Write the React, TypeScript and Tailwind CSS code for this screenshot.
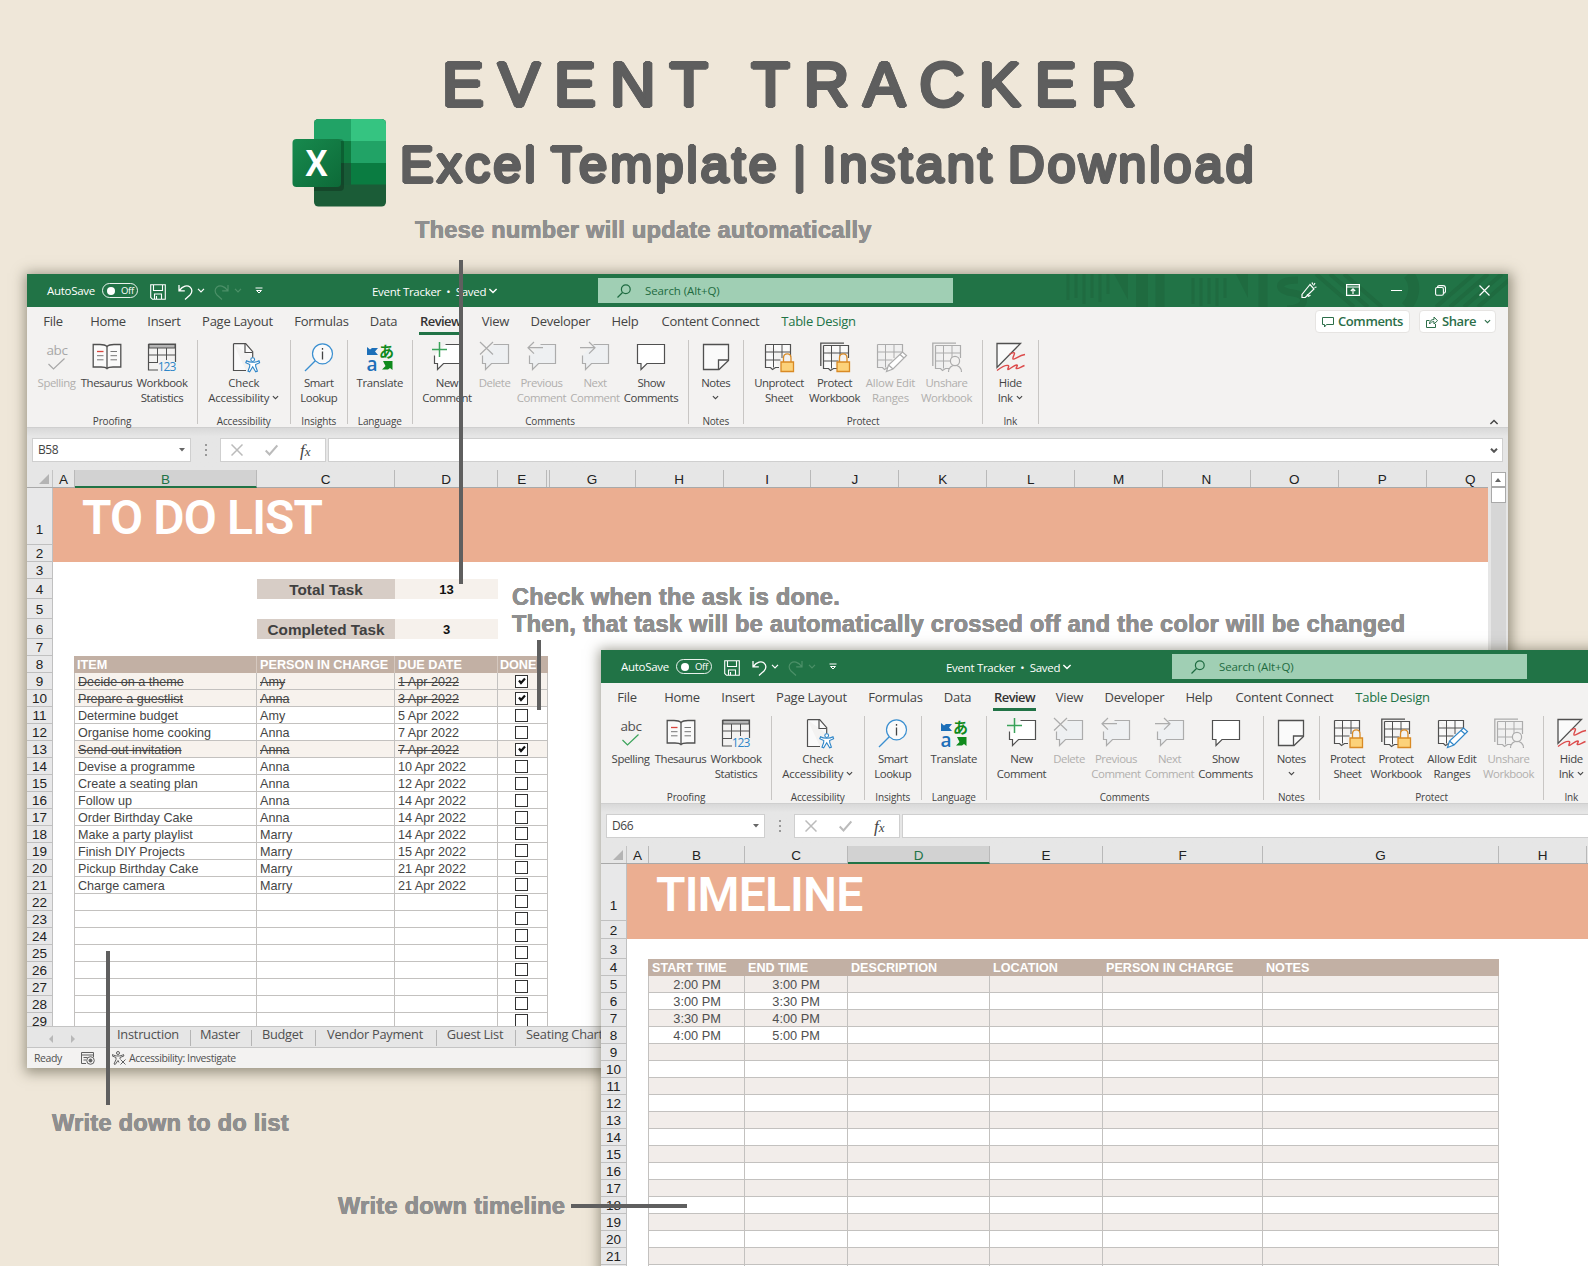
import type { ReactNode } from "react";

type Tone = { dim?: boolean };

/* ---------- icons ---------- */

function Chevron({ className = "" }: { className?: string }) {
  return (
    <svg viewBox="0 0 8 5" className={className} fill="none" stroke="currentColor" strokeWidth="1.2">
      <path d="M1 .8 4 3.8 7 .8" />
    </svg>
  );
}

function Icon({ children, className = "" }: { children: ReactNode; className?: string }) {
  return (
    <svg viewBox="0 0 30 30" fill="none" className={`h-[30px] w-[30px] shrink-0 overflow-visible ${className}`}>
      {children}
    </svg>
  );
}

function SpellingIcon({ dim }: Tone) {
  return (
    <Icon>
      <text x="15" y="13" textAnchor="middle" fontSize="13.5" fontFamily="Open Sans, sans-serif" fill={dim ? "#a8a8a8" : "#505050"}>
        abc
      </text>
      <path d="M6.5 22 11.5 27 22.5 16.5" stroke={dim ? "#a8a8a8" : "#3aa35a"} strokeWidth="1.2" />
    </Icon>
  );
}

function BookIcon() {
  return (
    <Icon>
      <path d="M15 4.5C13.5 3 11 2.500 8 2.500H1.200V25H9c3 0 5 .5 6 1.700C16 25.500 18 25 21 25h7.800V2.500H22c-3 0-5.500.5-7 2Z" fill="#fafafa" stroke="#505050" strokeWidth="1.3" />
      <path d="M15 4.5V26" stroke="#505050" strokeWidth="1.3" />
      <path d="M5 9.500h6.500" stroke="#d9453d" strokeWidth="1.3" />
      <path d="M5 13.700h6.500M5 17.800h6.500M18.500 9.500H25M18.500 13.700H25M18.500 17.800H25" stroke="#777" />
    </Icon>
  );
}

function WorkbookIcon() {
  return (
    <Icon>
      <path d="M1.500 2h27v18M1.500 2v26H11" stroke="#505050" strokeWidth="1.2" />
      <path d="M2 2.500h26v3.500H2z" fill="#b5b5b5" stroke="#505050" />
      <path d="M2 13h26.500M2 20.500h9M10.500 6v14M19.500 6v12" stroke="#505050" />
      <text x="10.8" y="28.8" fontSize="12" fontFamily="Open Sans, sans-serif" fill="#2f86c8" textLength="18">
        123
      </text>
    </Icon>
  );
}

function AccessibilityIcon() {
  return (
    <Icon>
      <path d="M4.500 1.700h12.200l7 8v6M4.500 1.700V28.500H17" fill="#fafafa" stroke="#505050" strokeWidth="1.2" />
      <path d="M16 1.700V10.500h7.500" stroke="#505050" strokeWidth="1.2" />
      <circle cx="23.700" cy="17.600" r="1.900" fill="#fff" stroke="#2f86c8" strokeWidth="1.1" />
      <path d="M17.500 18.800c3 2 9.500 2 12.500 0l.6 2-4 1.700.2 2.300 1.600 4.300-1.700.7-3-5-3 5-1.700-.7 1.600-4.300.2-2.300-4-1.700Z" fill="#fff" stroke="#2f86c8" strokeWidth="1.1" />
    </Icon>
  );
}

function LookupIcon() {
  return (
    <Icon>
      <circle cx="18.500" cy="11.800" r="10" fill="#fafafa" stroke="#3a8fd0" strokeWidth="1.2" />
      <path d="M11.300 18.800 1 29" stroke="#3a8fd0" strokeWidth="1.3" />
      <path d="M18.500 9.500v8M18.500 6v1.700" stroke="#444" strokeWidth="1.3" />
    </Icon>
  );
}

function TranslateIcon() {
  return (
    <Icon>
      <path d="M2 5l3 2.500 2-1.500h6l-3 3.500L13 13H2z" fill="#1c6fb8" />
      <text x="1.500" y="28.500" fontSize="19" fontFamily="Open Sans, sans-serif" fontWeight="600" fill="#1c6fb8" textLength="10">
        a
      </text>
      <text x="14" y="14.500" fontSize="15" fontFamily="Noto Sans CJK JP, sans-serif" fontWeight="700" fill="#0f8a1c">
        あ
      </text>
      <path d="M18 19h9.500v9l-2.500-2-2 1.500h-6l3.500-3.500z" fill="#0f8a1c" />
    </Icon>
  );
}

function Bubble({ dim, kind }: Tone & { kind: "new" | "delete" | "prev" | "next" | "show" }) {
  const line = dim ? "#acacac" : "#505050";
  const fill = dim ? "#eef0f2" : "#fff";
  return (
    <Icon>
      {kind === "show" ? (
        <path d="M1.500 2.500h27v19H11l-6 6v-6H1.500z" fill={fill} stroke={line} strokeWidth="1.2" />
      ) : (
        <path d="M13.500 2.500h15v19H11.500l-6 6v-6H2.500V13.500" fill={fill} stroke={line} strokeWidth="1.2" />
      )}
      {kind === "new" && <path d="M7.500 0v15M0 7.500h15" stroke="#3aa35a" strokeWidth="1.5" />}
      {kind === "delete" && <path d="M0 0l13 12.500M13 0 0 12.500" stroke={line} strokeWidth="1.2" />}
      {kind === "prev" && <path d="M7 0 1 5.700l6 6M1 5.700h15" stroke={line} strokeWidth="1.2" />}
      {kind === "next" && <path d="M9 0l6 5.700-6 6M0 5.700h15" stroke={line} strokeWidth="1.2" />}
    </Icon>
  );
}

function NotesIcon() {
  return (
    <Icon>
      <path d="M2.500 2.500h25v16l-9.500 9H2.500z" fill="#fafafa" stroke="#505050" strokeWidth="1.3" />
      <path d="M17.500 27.500v-9.500h10" stroke="#505050" strokeWidth="1.3" />
    </Icon>
  );
}

function SheetIcon({ dim, badge, stacked }: Tone & { badge: "lock" | "pencil" | "user"; stacked?: boolean }) {
  const line = dim ? "#acacac" : "#505050";
  const blue = dim ? "#acacac" : "#2f86c8";
  return (
    <Icon>
      {stacked && <path d="M24 1.200H.8V24" stroke={line} strokeWidth="1.3" />}
      <g transform={stacked ? "translate(2 2)" : "translate(0 1)"}>
        <path d="M1.500 1.500h25V14M1.500 1.500v23h5l2 2 3-2H15" fill={dim ? "#f0f0f0" : "#fafafa"} stroke={line} strokeWidth="1.2" />
        <path d="M1.500 9h25M1.500 17h15M9.500 1.500v23M18 1.500V15" stroke={line} />
      </g>
      {badge === "lock" && (
        <g stroke="#d98a25" strokeWidth="1.3">
          <path d="M19.500 20v-4c0-5.500 7.500-5.500 7.500 0v4" fill="#f3f2f1" />
          <path d="M17 20h12.500v9.500H17z" fill="#fcd27a" />
        </g>
      )}
      {badge === "pencil" && (
        <path d="M10.500 29.500l2-6.500L26.500 10l4 3.500L17 27zM12.500 23l4.500 4M24 12.500l4 3.500" fill="#fff" stroke={blue} strokeWidth="1.2" />
      )}
      {badge === "user" && (
        <g fill="#f3f2f1" stroke={line} strokeWidth="1.2">
          <path d="M16.500 30c0-9 13-9 13 0" />
          <circle cx="23" cy="19" r="4.600" />
        </g>
      )}
    </Icon>
  );
}

function InkIcon() {
  return (
    <Icon>
      <path d="M2 1.500h23.500L2 25.500z" fill="#fafafa" stroke="#505050" strokeWidth="1.3" />
      <path d="M14.500 12.500c2-1.500 4.500-2.500 5-1.500s-2.500 5-1.500 6 6-3.500 12-4.500M2 28.500c4-3 9-5.500 11-5s-1 3.500 0 4 6-4.500 8.500-4.500-1.500 3 0 3.500 4-1.500 8-3" stroke="#dc4b4b" strokeWidth="1.4" />
    </Icon>
  );
}

function ExcelLogo() {
  return (
    <svg viewBox="0 0 94 88" className="h-[88px] w-[94px]">
      <defs>
        <clipPath id="sheet">
          <rect x="22" y="0" width="72" height="87.500" rx="4.500" />
        </clipPath>
        <linearGradient id="tile" x1="0" y1="0" x2="1" y2="1">
          <stop offset="0" stopColor="#178a4e" />
          <stop offset="1" stopColor="#0d6a38" />
        </linearGradient>
      </defs>
      <g clipPath="url(#sheet)">
        <path d="M22 0h72v88H22z" fill="#1b5c37" />
        <path d="M22 0h37v22H22z" fill="#21a366" />
        <path d="M59 0h35v22H59z" fill="#35c481" />
        <path d="M22 22h37v22H22z" fill="#107c41" />
        <path d="M59 22h35v22H59z" fill="#21a366" />
        <path d="M22 44h37v22H22z" fill="#185c37" />
        <path d="M59 44h35v21.500H59z" fill="#0a7c41" />
        <rect x="14" y="20" width="38" height="52" rx="4" fill="#000" opacity=".22" />
      </g>
      <rect x="0.500" y="20" width="48.500" height="48" rx="4" fill="url(#tile)" />
      <text x="24.500" y="57" fontSize="36" fontWeight="700" fontFamily="Open Sans, sans-serif" fill="#fff" textAnchor="middle" textLength="22" lengthAdjust="spacingAndGlyphs">
        X
      </text>
    </svg>
  );
}

/* ---------- window chrome ---------- */

function TitleBar({ full }: { full?: boolean }) {
  return (
    <div className="relative flex h-[33px] items-center bg-[#217346] text-[11.5px] leading-none tracking-[-0.3px] text-white">
      {full && (
        <svg viewBox="0 0 450 33" className="absolute right-0 top-0 h-[33px] w-[450px]" fill="none" stroke="#1f6b40">
          <path d="M10 0v26M18 0v24M26 0v30M34 0v24M42 0v28M50 0v20M135 4v26M143 4v28M151 4v26M159 4v28M167 4v20" strokeWidth="3" />
          <path d="M56 0h14v26zM178 0h12v24zM78 0h12v33H78z" fill="#1f6b40" stroke="none" />
          <path d="M102 0v33M205 0v33" strokeWidth="9" />
          <path d="M240 6c-25 0-20 12-5 13s15 16-6 16" strokeWidth="7" />
          <path d="M258 0l38 33M272 0l38 33M286 0l38 33M392 33l38-33M406 33l38-33M420 33l38-33M378 33l38-33" strokeWidth="4" />
          <path d="M350 0c8 8 8 22-2 33" strokeWidth="11" />
        </svg>
      )}
      <span className="w-[52px] whitespace-nowrap pl-5">AutoSave</span>
      <div className="ml-[23px] flex h-[15px] w-[36px] shrink-0 items-center rounded-full border border-white/90 pl-[4px]">
        <span className="h-2 w-2 rounded-full bg-white" />
        <span className="ml-[6px] text-[9.5px]">Off</span>
      </div>
      <svg viewBox="0 0 16 16" className="ml-[12px] mt-[3px] h-4 w-4 shrink-0" fill="none" stroke="#fff" strokeWidth="1.1">
        <path d="M.7.700h14.600v14.600H2.500L.7 13.500zM3.500.700v5.800h9V.700M4.500 15V10h7v5M6.500 12v3" />
      </svg>
      <svg viewBox="0 0 15 16" className="ml-[12px] mt-[2px] h-4 w-[15px] shrink-0" fill="none" stroke="#fff" strokeWidth="1.3">
        <path d="M1 1v5.800h5.800M1.300 6.500C5 1.500 9.500 1 12 3s2.500 5.500 0 8L7 15.500" />
      </svg>
      <Chevron className="ml-[4px] h-[5px] w-[8px] shrink-0" />
      <svg viewBox="0 0 15 16" className="ml-[9px] mt-[2px] h-4 w-[15px] shrink-0" fill="none" stroke="#4c9068" strokeWidth="1.2">
        <path d="M14 1v5.800H8.200M13.700 6.500C10 1.500 5.500 1 3 3s-2.500 5.500 0 8L8 15.500" />
      </svg>
      <Chevron className="ml-[5px] h-[5px] w-[8px] shrink-0 text-[#4c9068]" />
      <svg viewBox="0 0 8 8" className="ml-[13px] h-2 w-2 shrink-0" fill="none" stroke="#fff">
        <path d="M.5 1h7M1.500 3.500 4 6l2.500-2.500z" />
      </svg>
      <span className="ml-[109px] mt-[2px] w-[112px] shrink-0 whitespace-nowrap">Event Tracker&nbsp; •&nbsp; Saved</span>
      <Chevron className="ml-[4px] mt-px h-[6px] w-[10px] shrink-0" />
      <div className="absolute left-[571px] top-1 flex h-[25px] w-[355px] items-center bg-[#a0cfb4] pl-[19px] tracking-[-0.1px] text-[#1e6b41]">
        <svg viewBox="0 0 14 14" className="h-[14px] w-[14px]" fill="none" stroke="currentColor" strokeWidth="1.2">
          <circle cx="8.800" cy="5.200" r="4.400" />
          <path d="M5.500 8.500.5 13.500" />
        </svg>
        <span className="ml-[14px]">Search (Alt+Q)</span>
      </div>
      {full && (
        <div className="absolute right-[18px] top-[8px] flex items-center">
          <svg viewBox="0 0 16 16" className="h-4 w-4" fill="none" stroke="#fff" strokeWidth="1.2">
            <path d="M9 2.500 1 12.500v3l3 .2 9-8.700zM6 12.500l1.500 1.800 2-1M11 .5l.8 2M14 1l-1.500 2.500M15.500 5l-2 .5" />
          </svg>
          <svg viewBox="0 0 14 12" className="ml-[29px] h-3 w-[14px]" fill="none" stroke="#fff" strokeWidth="1.2">
            <path d="M.6.600h12.800v10.800H.6zM.6 3h12.800M7 10V5M4.800 7 7 4.800 9.200 7" />
          </svg>
          <span className="ml-[31px] h-px w-[11px] bg-white" />
          <svg viewBox="0 0 11 11" className="ml-[33px] h-[11px] w-[11px]" fill="none" stroke="#fff" strokeWidth="1.1">
            <rect x=".6" y="2.500" width="7.800" height="7.800" rx="1.500" />
            <path d="M2.500 2.500C2.500 1 3.500.600 4.500.600H8c1.500 0 2.500 1 2.500 2.500v3c0 1.500-.8 2.200-2 2.200" />
          </svg>
          <svg viewBox="0 0 11 11" className="ml-[33px] h-[11px] w-[11px]" stroke="#fff" strokeWidth="1.2">
            <path d="M.5.500l10 10M10.500.500l-10 10" />
          </svg>
        </div>
      )}
    </div>
  );
}

const TABS = [
  ["File", "w-[52px]"],
  ["Home", "w-[58px]"],
  ["Insert", "w-[54px]"],
  ["Page Layout", "w-[93px]"],
  ["Formulas", "w-[75px]"],
  ["Data", "w-[49px]"],
  ["Review", "w-[65px]"],
  ["View", "w-[45px]"],
  ["Developer", "w-[85px]"],
  ["Help", "w-[44px]"],
  ["Content Connect", "w-[127px]"],
  ["Table Design", "w-[89px]"],
];

function Tabs({ full }: { full?: boolean }) {
  return (
    <div className="flex h-[33px] items-start text-[13px] leading-none tracking-[-0.27px] text-[#444]">
      {TABS.map(([name, width]) => (
        <div key={name} className={`flex h-[30px] shrink-0 justify-center whitespace-nowrap pt-2 ${width}`}>
          {name === "Review" ? (
            <span className="flex h-[20px] w-[43px] justify-center border-b-[3px] border-[#217346] font-semibold tracking-[-0.6px] text-[#333]">{name}</span>
          ) : (
            <span className={name === "Table Design" ? "text-[#217346]" : ""}>{name}</span>
          )}
        </div>
      ))}
      {full && (
        <div className="ml-auto mr-[12px] mt-[3px] flex gap-[9px] font-semibold tracking-[-0.4px] text-[#2c6e49]">
          <div className="flex h-[23px] w-[95px] items-center rounded-sm border border-[#e6e4e2] bg-white pl-[6px]">
            <svg viewBox="0 0 12 12" className="mr-1 h-3 w-3" fill="none" stroke="currentColor">
              <path d="M.5 1.500h11v7H4.500l-2 2.500V8.500h-2z" />
            </svg>
            Comments
          </div>
          <div className="flex h-[23px] w-[77px] items-center rounded-sm border border-[#e6e4e2] bg-white pl-[6px]">
            <svg viewBox="0 0 12 12" className="mr-1 h-3 w-3" fill="none" stroke="currentColor">
              <path d="M3.500 4.500h-3v7h9V8M3.500 8c0-3 1.500-4.500 4.500-4.500V1l3.500 3.700L8 8V5.700C6 5.500 4.500 6.500 3.500 8z" />
            </svg>
            Share
            <Chevron className="ml-auto mr-[4px] h-[5px] w-[7px]" />
          </div>
        </div>
      )}
    </div>
  );
}

function Group({ name, width, children }: { name: string; width: string; children: ReactNode }) {
  return (
    <div className={`flex shrink-0 ${width}`}>
      <div className="flex h-[88px] flex-1 flex-col justify-between">
        <div className="flex justify-center pt-[2px]">{children}</div>
        <div className="text-center text-[10px] leading-[14px] tracking-[-0.15px]">{name}</div>
      </div>
      <div className="h-[84px] w-px bg-[#c8c6c4]" />
    </div>
  );
}

function Tool({ icon, lines, width, dim, menu }: Tone & { icon: ReactNode; lines: string[]; width: string; menu?: boolean }) {
  return (
    <div className={`flex shrink-0 flex-col items-center ${width} ${dim ? "text-[#b1afad]" : "text-[#444]"}`}>
      {icon}
      <div className="mt-[3px] text-center">
        {lines.map((line, i) => (
          <div key={i} className="flex h-[15.3px] items-center justify-center whitespace-nowrap">
            {line}
            {menu && i === lines.length - 1 && <Chevron className={line ? "ml-[3px] h-[5px] w-[7px]" : "h-[5px] w-[7px]"} />}
          </div>
        ))}
      </div>
    </div>
  );
}

function Ribbon({ full }: { full?: boolean }) {
  return (
    <div className="flex h-[88px] border-b border-[#cfcfcf] text-[11.4px] leading-[15.3px] tracking-[-0.45px] text-[#444]">
      <Group name="Proofing" width="w-[171px]">
        <Tool icon={<SpellingIcon dim={full} />} lines={["Spelling"]} width="w-[46px]" dim={full} />
        <Tool icon={<BookIcon />} lines={["Thesaurus"]} width="w-[54px]" />
        <Tool icon={<WorkbookIcon />} lines={["Workbook", "Statistics"]} width="w-[57px]" />
      </Group>
      <Group name="Accessibility" width="w-[92.5px]">
        <Tool icon={<AccessibilityIcon />} lines={["Check", "Accessibility"]} width="w-[80px] tracking-[-0.2px]" menu />
      </Group>
      <Group name="Insights" width="w-[57.5px]">
        <Tool icon={<LookupIcon />} lines={["Smart", "Lookup"]} width="w-[50px]" />
      </Group>
      <Group name="Language" width="w-[64.5px]">
        <Tool icon={<TranslateIcon />} lines={["Translate"]} width="w-[56px] tracking-[-0.3px]" />
      </Group>
      <Group name="Comments" width={full ? "w-[276px]" : "w-[277px]"}>
        <Tool icon={<Bubble kind="new" />} lines={["New", "Comment"]} width="w-[54px]" />
        <Tool icon={<Bubble kind="delete" dim />} lines={["Delete"]} width="w-[41px]" dim />
        <Tool icon={<Bubble kind="prev" dim />} lines={["Previous", "Comment"]} width="w-[53px]" dim />
        <Tool icon={<Bubble kind="next" dim />} lines={["Next", "Comment"]} width="w-[54px]" dim />
        <Tool icon={<Bubble kind="show" />} lines={["Show", "Comments"]} width="w-[58px]" />
      </Group>
      <Group name="Notes" width={full ? "w-[55.5px]" : "w-[56.5px]"}>
        <Tool icon={<NotesIcon />} lines={["Notes", ""]} width="w-[40px]" menu />
      </Group>
      {full ? (
        <Group name="Protect" width="w-[239px]">
          <Tool icon={<SheetIcon badge="lock" />} lines={["Unprotect", "Sheet"]} width="w-[55px]" />
          <Tool icon={<SheetIcon badge="lock" stacked />} lines={["Protect", "Workbook"]} width="w-[56px]" />
          <Tool icon={<SheetIcon badge="pencil" dim />} lines={["Allow Edit", "Ranges"]} width="w-[56px] tracking-[-0.25px]" dim />
          <Tool icon={<SheetIcon badge="user" stacked dim />} lines={["Unshare", "Workbook"]} width="w-[56px]" dim />
        </Group>
      ) : (
        <Group name="Protect" width="w-[224px]">
          <Tool icon={<SheetIcon badge="lock" />} lines={["Protect", "Sheet"]} width="w-[42px]" />
          <Tool icon={<SheetIcon badge="lock" stacked />} lines={["Protect", "Workbook"]} width="w-[55px]" />
          <Tool icon={<SheetIcon badge="pencil" />} lines={["Allow Edit", "Ranges"]} width="w-[57px] tracking-[-0.25px]" />
          <Tool icon={<SheetIcon badge="user" stacked dim />} lines={["Unshare", "Workbook"]} width="w-[56px]" dim />
        </Group>
      )}
      <Group name="Ink" width="w-[55.5px]">
        <Tool icon={<InkIcon />} lines={["Hide", "Ink"]} width="w-[40px]" menu />
      </Group>
      {full && <Chevron className="ml-auto mr-[9px] mt-[79px] h-[6px] w-[10px] rotate-180" />}
    </div>
  );
}

function FormulaBar({ cell }: { cell: string }) {
  return (
    <div className="flex h-[42px] items-start bg-gradient-to-b from-[#d9d9d9] to-[#e6e6e6] to-[20%] pl-[5px] pr-[5px] pt-[10px] text-[12px] text-[#444]">
      <div className="flex h-[24px] w-[159px] shrink-0 items-center justify-between border border-[#cfcfcf] bg-white px-[5px] tracking-[-0.4px]">
        {cell}
        <svg viewBox="0 0 6 4" className="h-1 w-[6px]" fill="#666">
          <path d="M0 0h6L3 3.500z" />
        </svg>
      </div>
      <svg viewBox="0 0 2 12" className="mx-[13.5px] mt-[6px] h-3 w-[2px] shrink-0" fill="#999">
        <path d="M0 0h2v2H0zM0 5h2v2H0zM0 10h2v2H0z" />
      </svg>
      <div className="flex h-[24px] w-[106px] shrink-0 items-center border border-[#cfcfcf] bg-white pl-[10px]">
        <svg viewBox="0 0 12 12" className="h-3 w-3" stroke="#bbb" strokeWidth="1.5">
          <path d="M.5.500l11 11M11.500.500l-11 11" />
        </svg>
        <svg viewBox="0 0 13 12" className="ml-[22px] h-3 w-[13px]" fill="none" stroke="#bbb" strokeWidth="2">
          <path d="M.7 6.500 4.500 10.500 12.300 1.500" />
        </svg>
        <span className="ml-[22px] font-['Liberation_Serif'] text-[17px] italic leading-none">
          f<span className="text-[13px]">x</span>
        </span>
      </div>
      <div className="ml-[2px] flex h-[24px] flex-1 items-center justify-end border border-[#cfcfcf] bg-white pr-[4px]">
        <svg viewBox="0 0 8 5" className="h-[5px] w-[8px]" fill="none" stroke="#555" strokeWidth="2">
          <path d="M1 .8 4 3.800 7 .8" />
        </svg>
      </div>
    </div>
  );
}

function ColumnHeader({ cols, active }: { cols: string[][]; active: string }) {
  return (
    <div className="flex h-[18px] shrink-0 border-b border-[#a9a9a9] bg-[#e6e6e6] font-['Liberation_Sans'] text-[13.5px] leading-[19px] text-[#222]">
      <div className="flex w-[26px] shrink-0 items-end justify-end border-r border-[#c4c4c4] pb-[3px] pr-[3px]">
        <svg viewBox="0 0 10 10" className="h-[10px] w-[10px]" fill="#b4b4b4">
          <path d="M10 0v10H0z" />
        </svg>
      </div>
      {cols.map(([name, width]) => (
        <div
          key={name}
          className={`shrink-0 border-r border-[#b9b9b9] text-center ${width} ${
            name === active ? "h-[18px] border-b-2 border-b-[#217346] bg-[#d2d2d2] text-[#217346]" : ""
          }`}
        >
          {name === "F*" ? "" : name}
        </div>
      ))}
    </div>
  );
}

function Row({ n, height = "h-[17px]", numClass = "items-center", children, className = "" }: { n: number; height?: string; numClass?: string; children?: ReactNode; className?: string }) {
  return (
    <div className={`flex shrink-0 ${height}`}>
      <div className={`flex w-[26px] shrink-0 justify-center border-b border-r border-[#c0c0c0] bg-[#e8e8e9] font-['Liberation_Sans'] text-[13.5px] leading-[17px] text-[#222] ${numClass}`}>
        <span className="mt-px">{n}</span>
      </div>
      <div className={`flex flex-1 ${className}`}>{children}</div>
    </div>
  );
}

function ExcelWindow({ cell, full, cols, active, className, children, footer }: { cell: string; full?: boolean; cols: string[][]; active: string; className: string; children: ReactNode; footer?: ReactNode }) {
  return (
    <div className={`absolute flex flex-col overflow-hidden bg-[#f3f2f1] shadow-[1px_2px_12px_3px_rgba(70,65,45,0.5)] ${className}`}>
      <TitleBar full={full} />
      <Tabs full={full} />
      <Ribbon full={full} />
      <FormulaBar cell={cell} />
      <div className="flex min-h-0 flex-1 bg-white">
        <div className="flex min-w-0 flex-1 flex-col overflow-hidden">
          <ColumnHeader cols={cols} active={active} />
          {children}
        </div>
        {full && (
          <div className="flex w-[20px] flex-col items-center bg-[#e6e6e6] pt-[2px]">
            <div className="flex h-[15px] w-[15px] items-center justify-center border border-[#a9a9a9] bg-white">
              <svg viewBox="0 0 6 4" className="h-1 w-[6px]" fill="#666">
                <path d="M0 4h6L3 0z" />
              </svg>
            </div>
            <div className="h-[16px] w-[15px] border border-[#a9a9a9] bg-white" />
            <div className="w-[15px] flex-1 bg-[#d6d6d6]" />
          </div>
        )}
      </div>
      {footer}
    </div>
  );
}

/* ---------- sheets ---------- */

const TODO_COLS = [
  ["A", "w-[22px]"],
  ["B", "w-[182px]"],
  ["C", "w-[138px]"],
  ["D", "w-[103px]"],
  ["E", "w-[48.5px]"],
  ["F*", "w-[3px]"],
  ["G", "w-[86.2px]"],
  ["H", "w-[87.9px]"],
  ["I", "w-[87.9px]"],
  ["J", "w-[87.9px]"],
  ["K", "w-[87.9px]"],
  ["L", "w-[87.9px]"],
  ["M", "w-[87.9px]"],
  ["N", "w-[87.9px]"],
  ["O", "w-[87.9px]"],
  ["P", "w-[87.9px]"],
  ["Q", "w-[87.9px]"],
];

const TIME_COLS = [
  ["A", "w-[22px]"],
  ["B", "w-[96px]"],
  ["C", "w-[103px]"],
  ["D", "w-[142px]"],
  ["E", "w-[113px]"],
  ["F", "w-[160px]"],
  ["G", "w-[236px]"],
  ["H", "w-[88px]"],
];

const TASKS = [
  ["Decide on a theme", "Amy", "1 Apr 2022", "x"],
  ["Prepare a guestlist", "Anna", "3 Apr 2022", "x"],
  ["Determine budget", "Amy", "5 Apr 2022"],
  ["Organise home cooking", "Anna", "7 Apr 2022"],
  ["Send out invitation", "Anna", "7 Apr 2022", "x"],
  ["Devise a programme", "Anna", "10 Apr 2022"],
  ["Create a seating plan", "Anna", "12 Apr 2022"],
  ["Follow up", "Anna", "14 Apr 2022"],
  ["Order Birthday Cake", "Anna", "14 Apr 2022"],
  ["Make a party playlist", "Marry", "14 Apr 2022"],
  ["Finish DIY Projects", "Marry", "15 Apr 2022"],
  ["Pickup Birthday Cake", "Marry", "21 Apr 2022"],
  ["Charge camera", "Marry", "21 Apr 2022"],
  ...Array.from({ length: 8 }, () => ["", "", ""]),
];

const TIMES = [
  ["2:00 PM", "3:00 PM"],
  ["3:00 PM", "3:30 PM"],
  ["3:30 PM", "4:00 PM"],
  ["4:00 PM", "5:00 PM"],
  ...Array.from({ length: 14 }, () => ["", ""]),
];

function TaskRow({ n, task }: { n: number; task: string[] }) {
  const [item, person, due, done] = task;
  const cell = `shrink-0 border-b border-r border-[#c3c1bf] pl-[3px] whitespace-nowrap ${done ? "line-through" : ""}`;
  return (
    <Row n={n} height="h-[16.97px]">
      <div className="w-[21px] shrink-0" />
      <div className={`flex border-l border-[#c3c1bf] text-[12.6px] leading-[19px] text-[#454545] ${done ? "bg-[#f7f2ed]" : ""}`}>
        <div className={`w-[182px] ${cell}`}>{item}</div>
        <div className={`w-[138px] ${cell}`}>{person}</div>
        <div className={`w-[103px] ${cell}`}>{due}</div>
        <div className="flex w-[49.5px] items-center justify-center border-b border-r border-[#c3c1bf] pr-[1px]">
          <div className="flex h-[13px] w-[13px] items-center justify-center border border-[#333] bg-white">
            {done && (
              <svg viewBox="0 0 8 8" className="h-2 w-2" fill="none" stroke="#111" strokeWidth="2.2">
                <path d="M1 3.500 3 6 7 1.500" />
              </svg>
            )}
          </div>
        </div>
      </div>
    </Row>
  );
}

function Total({ label, value }: { label: string; value: number }) {
  return (
    <>
      <div className="w-[204px] shrink-0" />
      <div className="w-[138px] bg-[#d7cdc6] text-center text-[15.3px] font-bold leading-[21px] text-[#404040]">{label}</div>
      <div className="w-[103px] bg-[#f6f1ec] text-center text-[13px] font-bold leading-[21px] text-[#111]">{value}</div>
    </>
  );
}

function TodoSheet() {
  return (
    <div className="font-['Liberation_Sans']">
      <Row n={1} height="h-[56.5px]" numClass="items-end pb-[6px]" className="bg-[#ebae91]">
        <h2 className="ml-[29px] mt-[6px] whitespace-nowrap font-['Roboto'] text-[48px] font-semibold leading-none tracking-[-0.85px] text-white">TO DO LIST</h2>
      </Row>
      <Row n={2} height="h-[17.2px]" className="bg-[#ebae91]" />
      <Row n={3} />
      <Row n={4} height="h-[20.3px]" numClass="items-end">
        <Total label="Total Task" value={13} />
      </Row>
      <Row n={5} height="h-[19.7px]" numClass="items-end" />
      <Row n={6} height="h-[20.3px]" numClass="items-end">
        <Total label="Completed Task" value={3} />
      </Row>
      <Row n={7} />
      <Row n={8} height="h-[17.3px]">
        <div className="w-[21px] shrink-0" />
        <div className="flex whitespace-nowrap bg-[#c2b0a4] text-[12.7px] font-bold leading-[19px] text-white">
          <div className="w-[183px] border-r border-[#d5c8bf] pl-[3px]">ITEM</div>
          <div className="w-[138px] border-r border-[#d5c8bf] pl-[3px]">PERSON IN CHARGE</div>
          <div className="w-[103px] border-r border-[#d5c8bf] pl-[3px]">DUE DATE</div>
          <div className="w-[49.5px] pl-[2px] tracking-[-0.1px]">DONE</div>
        </div>
      </Row>
      {TASKS.map((task, i) => (
        <TaskRow key={i} n={i + 9} task={task} />
      ))}
    </div>
  );
}

function TimelineSheet() {
  const cols = TIME_COLS.slice(1, 7);
  const heads = ["START TIME", "END TIME", "DESCRIPTION", "LOCATION", "PERSON IN CHARGE", "NOTES"];
  return (
    <div className="font-['Liberation_Sans']">
      <Row n={1} height="h-[57.3px]" numClass="items-end pb-[6px]" className="bg-[#ebae91]">
        <h2 className="ml-[29px] mt-[7px] whitespace-nowrap font-['Roboto'] text-[48px] font-semibold leading-none tracking-[-0.85px] text-white">TIMELINE</h2>
      </Row>
      <Row n={2} height="h-[17.7px]" className="bg-[#ebae91]" />
      <Row n={3} height="h-[19.7px]" numClass="items-end" />
      <Row n={4} height="h-[17.3px]">
        <div className="w-[21px] shrink-0" />
        <div className="flex whitespace-nowrap bg-[#c2b0a4] pl-px text-[12.6px] font-bold leading-[19px] text-white">
          {heads.map((head, i) => (
            <div key={head} className={`shrink-0 pl-[3px] ${cols[i][1]}`}>
              {head}
            </div>
          ))}
        </div>
      </Row>
      {TIMES.map((times, r) => (
        <Row key={r} n={r + 5}>
          <div className="w-[21px] shrink-0" />
          <div className={`flex border-l border-[#c3c1bf] text-[12.8px] leading-[18px] text-[#505050] ${r % 2 ? "" : "bg-[#f2edea]"}`}>
            {cols.map(([name, width], i) => (
              <div key={name} className={`shrink-0 border-b border-r border-[#c3c1bf] text-right ${width} ${i === 0 ? "pr-[23px]" : "pr-[27px]"}`}>
                {times[i]}
              </div>
            ))}
          </div>
        </Row>
      ))}
    </div>
  );
}

const SHEET_TABS = [
  ["Instruction", "w-[83px]"],
  ["Master", "w-[61px]"],
  ["Budget", "w-[64px]"],
  ["Vendor Payment", "w-[121px]"],
  ["Guest List", "w-[79px]"],
  ["Seating Chart", "w-[100px]"],
];

function Footer() {
  return (
    <div className="shrink-0 text-[#505050]">
      <div className="flex h-[22px] items-start border-y border-[#c4c4c4] bg-[#e6e6e6] text-[12.8px] leading-[16px] tracking-[-0.25px]">
        <svg viewBox="0 0 26 8" className="ml-[22px] mr-[33px] mt-[8px] h-2 w-[26px]" fill="#b8b8b8">
          <path d="M4 0v8L0 4zM22 0v8l4-4z" />
        </svg>
        {SHEET_TABS.map(([name, width]) => (
          <div key={name} className={`mt-[3px] h-[16px] shrink-0 whitespace-nowrap border-r border-[#b5b5b5] text-center ${width}`}>
            <div className="-mt-[4px] pr-[2px]">{name}</div>
          </div>
        ))}
      </div>
      <div className="flex h-[20px] items-center pl-[7px] text-[10.5px] leading-none tracking-[-0.4px]">
        <span className="w-[47px]">Ready</span>
        <svg viewBox="0 0 14 13" className="h-[13px] w-[14px]" fill="none" stroke="#606060">
          <path d="M5 11.500H.5v-11h12V5M.5 3h12M2.500 5.500h4M2.500 8H5" />
          <circle cx="9.500" cy="8.500" r="3.800" fill="#f3f2f1" />
          <circle cx="9.500" cy="8.500" r="1.500" fill="#606060" />
        </svg>
        <svg viewBox="0 0 14 14" className="ml-[17px] h-[14px] w-[14px]" fill="none" stroke="#606060">
          <circle cx="6" cy="2" r="1.500" />
          <path d="M.5 3.500c3 2 8 2 11 0l.4 1.500L8 6.500v1.500M.5 3.500l-.2 1.500L4 6.500v2L2 13l1.200.5L6 9.500l1 2M8.500 8.500l5 5M13.500 8.500l-5 5" />
        </svg>
        <span className="ml-[3px]">Accessibility: Investigate</span>
      </div>
    </div>
  );
}

/* ---------- page ---------- */

function Note({ className, children }: { className: string; children: ReactNode }) {
  return (
    <p
      className={`absolute whitespace-nowrap font-['Liberation_Sans'] text-[23.5px] font-bold leading-[27px] tracking-[0.3px] text-[#8f8f8f] [text-shadow:0.35px_0_#8f8f8f,-0.35px_0_#8f8f8f,0_0.35px_#8f8f8f,0_-0.35px_#8f8f8f] ${className}`}
    >
      {children}
    </p>
  );
}

export default function App() {
  return (
    <main className="relative h-[1266px] w-[1588px] overflow-hidden bg-[#efe7d9] font-['Open_Sans',sans-serif]">
      <header className="flex flex-col font-['Liberation_Sans'] text-[#5e5e5e]">
        <h1 className="ml-[442px] mt-[53px] whitespace-nowrap text-[63px] leading-[63px] tracking-[14px] [text-shadow:2px_0_#5e5e5e,-2px_0_#5e5e5e,0_2px_#5e5e5e,0_-2px_#5e5e5e,1.4px_1.4px_#5e5e5e,-1.4px_1.4px_#5e5e5e,1.4px_-1.4px_#5e5e5e,-1.4px_-1.4px_#5e5e5e,1px_0_#5e5e5e,-1px_0_#5e5e5e]">
          EVENT TRACKER
        </h1>
        <div className="ml-[292px] mt-[3px] flex items-center">
          <ExcelLogo />
          <p className="ml-[14px] mt-[4px] whitespace-nowrap text-[50.7px] leading-[60px] tracking-[2.9px] [word-spacing:-3.7px] [text-shadow:1.7px_0_#5e5e5e,-1.7px_0_#5e5e5e,0_1.7px_#5e5e5e,0_-1.7px_#5e5e5e,1.2px_1.2px_#5e5e5e,-1.2px_1.2px_#5e5e5e,1.2px_-1.2px_#5e5e5e,-1.2px_-1.2px_#5e5e5e,0.8px_0_#5e5e5e,-0.8px_0_#5e5e5e]">
            Excel Template | Instant Download
          </p>
        </div>
      </header>

      <ExcelWindow cell="B58" full cols={TODO_COLS} active="B" className="left-[27px] top-[274px] h-[794px] w-[1481px]" footer={<Footer />}>
        <TodoSheet />
      </ExcelWindow>

      <ExcelWindow cell="D66" cols={TIME_COLS} active="D" className="left-[601px] top-[650px] h-[640px] w-[1481px]">
        <TimelineSheet />
      </ExcelWindow>

      <Note className="left-[415px] top-[217px]">These number will update automatically</Note>
      <Note className="left-[512px] top-[584px]">
        Check when the ask is done.
        <br />
        Then, that task will be automatically crossed off and the color will be changed
      </Note>
      <Note className="left-[52px] top-[1110px]">Write down to do list</Note>
      <Note className="left-[338px] top-[1193px]">Write down timeline</Note>

      <div className="absolute left-[459px] top-[260px] h-[324px] w-1 bg-[#5f5f5f]" />
      <div className="absolute left-[537px] top-[640px] h-[70px] w-1 bg-[#5f5f5f]" />
      <div className="absolute left-[106px] top-[951px] h-[154px] w-1 bg-[#5f5f5f]" />
      <div className="absolute left-[571px] top-[1204px] h-1 w-[116px] bg-[#5f5f5f]" />
    </main>
  );
}
